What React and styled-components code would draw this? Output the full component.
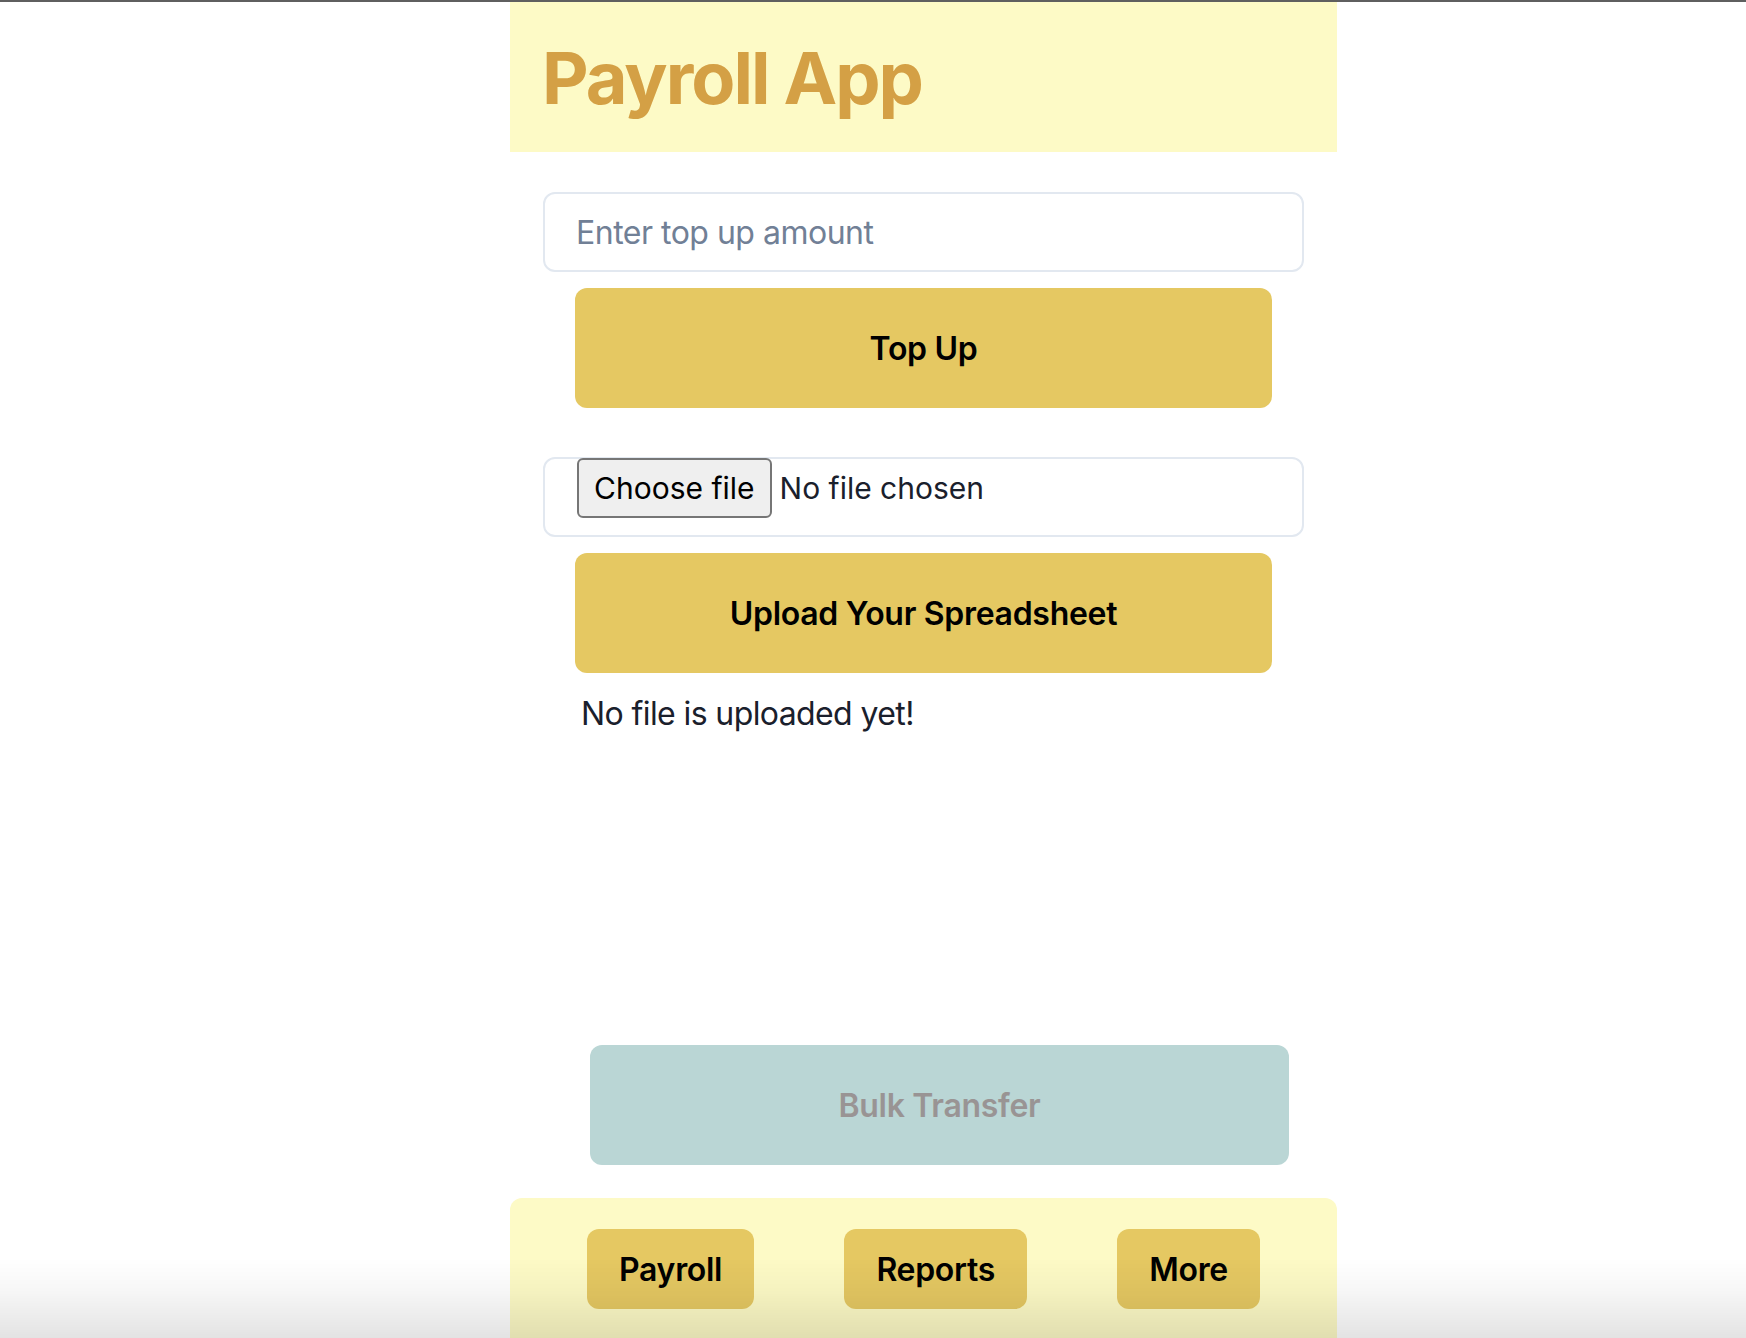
import React from 'react';
import styled, { createGlobalStyle } from 'styled-components';

const GlobalStyle = createGlobalStyle`
  html, body {
    margin: 0;
    padding: 0;
    background: #ffffff;
  }
  body {
    font-family: Inter, "Noto Sans", "Liberation Sans", sans-serif;
    color: #1a202c;
    overflow: hidden;
  }
  * {
    box-sizing: border-box;
  }
`;

const App = () => {
  return (
    <Page>
      <GlobalStyle />
      <Column>
        <Header>
          <Title>Payroll App</Title>
        </Header>

        <Content>
          <AmountInput type="text" placeholder="Enter top up amount" />
          <ActionButton>Top Up</ActionButton>

          <FileBox>
            <ChooseButton>Choose file</ChooseButton>
            <FileName>No file chosen</FileName>
          </FileBox>
          <ActionButton>Upload Your Spreadsheet</ActionButton>

          <Status>No file is uploaded yet!</Status>

          <BulkButton disabled>Bulk Transfer</BulkButton>
        </Content>

        <Footer>
          <NavButton>Payroll</NavButton>
          <NavButton>Reports</NavButton>
          <NavButton>More</NavButton>
        </Footer>
      </Column>
      <BottomFade />
    </Page>
  );
};

const Page = styled.div`
  min-height: 100vh;
  border-top: 2px solid #5f5f5f;
`;

const Column = styled.div`
  width: 827px;
  margin-left: 510px;
  display: flex;
  flex-direction: column;
`;

const Header = styled.header`
  background: #fdfac6;
  padding: 33px 32px 31px;
`;

const Title = styled.h1`
  margin: 0;
  font-size: 72px;
  line-height: 86px;
  font-weight: 700;
  color: #d4a045;
  letter-spacing: -2px;
`;

const Content = styled.main`
  padding: 40px 33px 0;
  display: flex;
  flex-direction: column;
`;

const AmountInput = styled.input`
  height: 80px;
  width: 100%;
  border: 2px solid #e2e8f0;
  border-radius: 12px;
  padding: 0 31px;
  font-family: inherit;
  font-size: 32px;
  letter-spacing: -0.5px;
  color: #1a202c;
  outline: none;
  background: #fff;

  &::placeholder {
    color: #718096;
  }
`;

const ActionButton = styled.button`
  margin: 16px 32px 0;
  height: 120px;
  border: none;
  border-radius: 12px;
  background: #e5c862;
  color: #000;
  font-family: inherit;
  font-size: 32px;
  font-weight: 600;
  letter-spacing: -0.3px;
  cursor: pointer;
`;

const FileBox = styled.div`
  margin-top: 49px;
  height: 80px;
  border: 2px solid #e2e8f0;
  border-radius: 12px;
  padding: 0 32px;
  display: flex;
  align-items: flex-start;
  gap: 8px;
`;

const ChooseButton = styled.button`
  margin-top: -1px;
  height: 60px;
  padding: 0 15px;
  border: 2px solid #767676;
  border-radius: 6px;
  background: #efefef;
  color: #000;
  font-family: inherit;
  font-size: 30px;
`;

const FileName = styled.span`
  line-height: 58px;
  font-size: 30px;
  color: #1a202c;
`;

const Status = styled.p`
  margin: 17px 0 0 38px;
  font-size: 32px;
  line-height: 48px;
  letter-spacing: -0.6px;
  color: #1a202c;
`;

const BulkButton = styled.button`
  margin: 307px 0 0 47px;
  width: 699px;
  height: 120px;
  border: none;
  border-radius: 12px;
  background: #bad6d5;
  color: #999494;
  font-family: inherit;
  font-size: 32px;
  font-weight: 600;
  letter-spacing: -0.3px;
`;

const Footer = styled.nav`
  margin-top: 33px;
  background: #fdfac6;
  border-radius: 12px 12px 0 0;
  padding: 31px 77px 40px 77px;
  display: flex;
  justify-content: space-between;
`;

const NavButton = styled.button`
  height: 80px;
  padding: 0 32px;
  border: none;
  border-radius: 12px;
  background: #e5c862;
  color: #000;
  font-family: inherit;
  font-size: 32px;
  font-weight: 600;
  letter-spacing: -0.3px;
`;

const BottomFade = styled.div`
  position: fixed;
  left: 0;
  right: 0;
  bottom: 0;
  height: 80px;
  pointer-events: none;
  background: linear-gradient(to bottom, rgba(0, 0, 0, 0) 0%, rgba(0, 0, 0, 0.03) 40%, rgba(0, 0, 0, 0.11) 100%);
`;

export default App;
